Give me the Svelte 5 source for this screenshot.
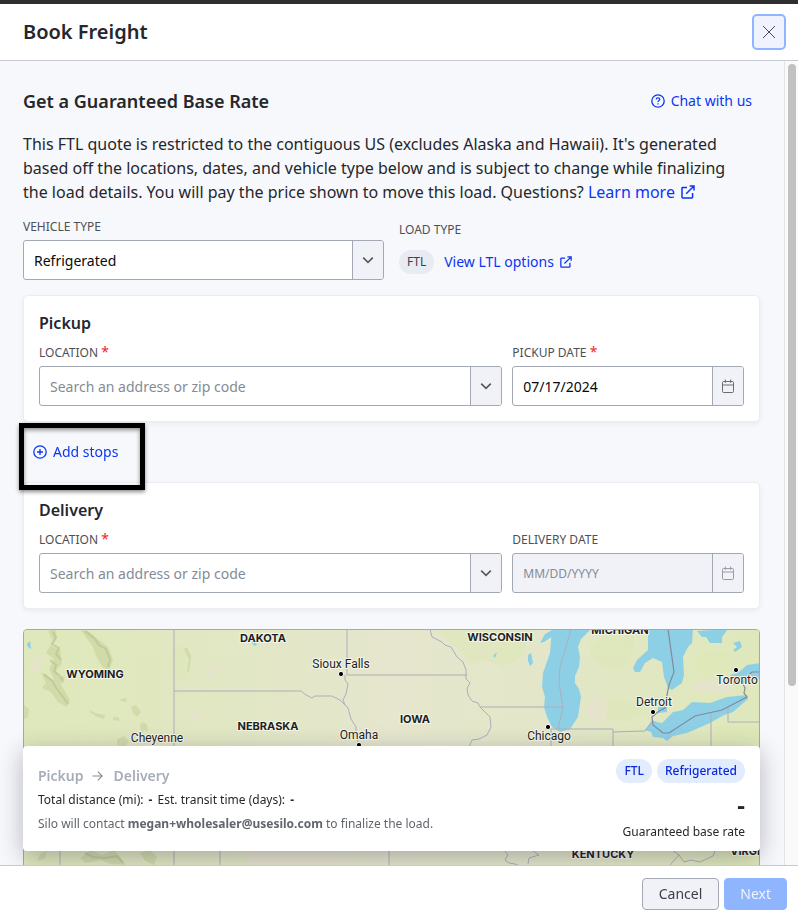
<script lang="ts">
	type MapLabel = { text: string; x: number; y: number };
	type City = MapLabel & { dot?: [number, number] };

	let vehicle = $state('Refrigerated');
	let pickupLocation = $state('');
	let pickupDate = $state('07/17/2024');
	let deliveryLocation = $state('');
	let deliveryDate = $state('');

	const email = 'megan+wholesaler@usesilo.com';
	const vehicles = ['Refrigerated', 'Dry van', 'Flatbed'];

	const states: MapLabel[] = [
		{ text: 'WYOMING', x: 72, y: 49 },
		{ text: 'DAKOTA', x: 240, y: 13 },
		{ text: 'NEBRASKA', x: 245, y: 101 },
		{ text: 'IOWA', x: 392, y: 94 },
		{ text: 'WISCONSIN', x: 477, y: 12 },
		{ text: 'MICHIGAN', x: 597, y: 5 },
		{ text: 'KENTUCKY', x: 580, y: 229 },
		{ text: 'VIRGINIA', x: 732, y: 226 }
	];

	const cities: City[] = [
		{ text: 'Cheyenne', x: 134, y: 113 },
		{ text: 'Sioux Falls', x: 318, y: 39, dot: [318, 45] },
		{ text: 'Omaha', x: 336, y: 110, dot: [336, 116] },
		{ text: 'Chicago', x: 526, y: 111, dot: [525, 98] },
		{ text: 'Detroit', x: 631, y: 77, dot: [630, 83] },
		{ text: 'Toronto', x: 714, y: 55, dot: [713, 41] }
	];

	const lakes = [
		'M529 0L527 24L520 44L519 58L522 68L521 78L524 88L529 98L537 103L547 100L555 88L558 68L556 60L552 54L552 47L556 38L557 28L555 18L558 10L568 0Z',
		'M531 0L522 5L517 14L521 13L530 7Z',
		'M505 26L508 24L510 34L507 37L505 32Z',
		'M625 0L625 21L614 31L610 39L612 43L617 43L622 34L630 29L639 33L641 48L645 59L649 61L659 54L661 46L660 28L665 18L669 14L670 0Z',
		'M674 2L679 8L683 8L687 14L699 14L699 8L705 0Z',
		'M710 14L717 12L719 18L712 23L710 21L714 18Z',
		'M737 34L724 36L715 44L707 46L709 56L719 54L737 50Z',
		'M635 78L644 77L644 83L635 84Z',
		'M622 101L629 91L634 93L639 94L650 83L660 81L669 73L687 74L704 68L724 66L725 70L710 83L701 86L687 94L664 104L650 107L644 112L640 109L630 108L628 103Z',
		'M4 15L7 12L8 20L5 18Z',
		'M229 5L232 13L234 16L231 17L228 11Z',
		'M470 27L474 23L472 29Z'
	];

	const hills = [
		'M25 2L32 0L34 8L28 17L37 20L39 34L33 42L37 49L42 46L40 55L32 52L26 40L31 30L23 24L30 12Z',
		'M58 1L65 2L77 12L85 18L90 31L86 41L80 39L72 25L70 18Z',
		'M18 43L28 50L36 52L47 71L44 78L35 73L28 63L19 59L23 54Z',
		'M164 18L168 27L166 43L164 42L166 31L161 20Z',
		'M67 81L72 84L82 86L81 90L74 88L67 83Z',
		'M98 70L104 69L103 73L97 72Z',
		'M108 78L113 76L118 83L114 88L110 84Z',
		'M118 93L124 95L125 103L121 101L119 105L117 98Z',
		'M91 87L96 89L96 92L90 91Z',
		'M0 75L6 80L5 88L0 91Z',
		'M94 110L101 107L106 112L103 117L94 116Z',
		'M57 229L68 221L79 226L91 221L103 236L88 235L77 231L63 234Z',
		'M117 224L127 221L134 228L131 236L122 232Z',
		'M17 225L24 222L22 230L14 232Z'
	];

	const ridges = [
		'M30 3L33 9L29 15L36 19L33 25L38 31',
		'M27 31L33 36L31 42L37 47L40 52',
		'M62 2L71 9L76 16L83 20L87 31L85 38',
		'M21 45L29 52L34 60L40 68L45 75',
		'M62 224L70 228L82 229L94 227L100 234'
	];

	const borders = [
		'M151 0V450',
		'M151 62H278L283 66L289 69L292 67L309 67L317 71L324 78',
		'M324 0V46H444',
		'M322 46L322 51L325 55L323 65L320 71L322 76L325 79L328 90L333 98L333 106L336 116V222',
		'M407 0L409 8L419 13L422 16L428 18L434 28L440 33L443 41L443 50L447 54L444 59L445 66L449 72L455 74L457 78L467 88L468 98L464 106L456 110L449 111L446 118L445 124',
		'M457 78H540',
		'M548 0L537 38L536 54L540 78L535 100',
		'M528 117V100H590V125M590 103L622 102L629 93',
		'M688 84V125M705 79V93H737',
		'M37 215V450M197 215V450M366 215V450',
		'M482 222L485 226L482 231L486 234L492 235L497 237M510 222L516 226L506 229L505 235',
		'M647 236L656 226L649 221M656 226L661 233L668 231L677 233L690 227L692 222'
	];
</script>

{#snippet chevron()}
	<svg width="12" height="12" viewBox="0 0 12 12" aria-hidden="true">
		<path d="M1.2 3.6 6 8.4l4.8-4.8" fill="none" stroke="#54585f" stroke-width="1.6" />
	</svg>
{/snippet}

{#snippet calendar()}
	<svg width="14" height="14" viewBox="0 0 14 14" fill="none" stroke="currentColor" aria-hidden="true">
		<rect x="1.5" y="2.5" width="11" height="11" rx="1" />
		<path d="M1.5 6h11M4.3.5v3.4M9.7.5v3.4" />
	</svg>
{/snippet}

{#snippet external(size: number)}
	<svg
		class="external"
		width={size}
		height={size}
		viewBox="0 0 14 14"
		fill="none"
		stroke="currentColor"
		stroke-width="1.5"
		aria-hidden="true"
	>
		<path d="M6 2.4H1.7a.7.7 0 0 0-.7.7v9.2c0 .4.3.7.7.7h9.2c.4 0 .7-.3.7-.7V8M8.6 1H13v4.4M13 1 5.2 8.8" />
	</svg>
{/snippet}

<div class="dialog" role="dialog" aria-labelledby="dialog-title">
	<header>
		<h1 id="dialog-title">Book Freight</h1>
		<button class="close" type="button" aria-label="Close">
			<svg width="14" height="14" viewBox="0 0 14 14" aria-hidden="true">
				<path d="m1 1 12 12M13 1 1 13" stroke="#494c53" stroke-width="1" />
			</svg>
		</button>
	</header>

	<div class="body">
		<main>
			<div class="heading">
				<h2>Get a Guaranteed Base Rate</h2>
				<button class="text-button" type="button">
					<svg width="14" height="14" viewBox="0 0 14 14" fill="none" stroke="currentColor" aria-hidden="true">
						<circle cx="7" cy="7" r="6.2" stroke-width="1.3" />
						<path d="M5.2 5.5c0-1 .8-1.6 1.8-1.6s1.8.6 1.8 1.5c0 1.2-1.8 1.2-1.8 2.6M7 9.2v1.2" stroke-width="1.2" />
					</svg>
					Chat with us
				</button>
			</div>

			<p class="intro">
				This FTL quote is restricted to the contiguous US (excludes Alaska and Hawaii). It's generated based off
				the locations, dates, and vehicle type below and is subject to change while finalizing the load details.
				You will pay the price shown to move this load. Questions?
				<a href="#learn-more">Learn more {@render external(14)}</a>
			</p>

			<div class="types">
				<div>
					<label for="vehicle">VEHICLE TYPE</label>
					<div class="control">
						<select id="vehicle" bind:value={vehicle}>
							{#each vehicles as v (v)}
								<option>{v}</option>
							{/each}
						</select>
						<span class="addon passive">{@render chevron()}</span>
					</div>
				</div>
				<div class="load">
					<span class="label">LOAD TYPE</span>
					<div class="load-row">
						<span class="pill">FTL</span>
						<a href="#ltl">View LTL options {@render external(12)}</a>
					</div>
				</div>
			</div>

			<section class="card">
				<h3>Pickup</h3>
				<div class="fields">
					<div>
						<label for="pickup-location">LOCATION <em>*</em></label>
						<div class="control">
							<input id="pickup-location" placeholder="Search an address or zip code" bind:value={pickupLocation} />
							<button class="addon" type="button" aria-label="Show locations">{@render chevron()}</button>
						</div>
					</div>
					<div>
						<label for="pickup-date">PICKUP DATE <em>*</em></label>
						<div class="control">
							<input id="pickup-date" placeholder="MM/DD/YYYY" bind:value={pickupDate} />
							<button class="addon" type="button" aria-label="Open calendar">{@render calendar()}</button>
						</div>
					</div>
				</div>
			</section>

			<div class="stops">
				<button class="text-button" type="button">
					<svg width="14" height="14" viewBox="0 0 14 14" fill="none" stroke="currentColor" aria-hidden="true">
						<circle cx="7" cy="7" r="6.2" stroke-width="1.3" />
						<path d="M7 4v6M4 7h6" stroke-width="1.3" />
					</svg>
					Add stops
				</button>
				<span class="highlight"></span>
			</div>

			<section class="card">
				<h3>Delivery</h3>
				<div class="fields">
					<div>
						<label for="delivery-location">LOCATION <em>*</em></label>
						<div class="control">
							<input
								id="delivery-location"
								placeholder="Search an address or zip code"
								bind:value={deliveryLocation}
							/>
							<button class="addon" type="button" aria-label="Show locations">{@render chevron()}</button>
						</div>
					</div>
					<div>
						<label for="delivery-date">DELIVERY DATE</label>
						<div class="control disabled">
							<input id="delivery-date" placeholder="MM/DD/YYYY" bind:value={deliveryDate} disabled />
							<button class="addon" type="button" aria-label="Open calendar" disabled>{@render calendar()}</button>
						</div>
					</div>
				</div>
			</section>

			<div class="map">
				<svg viewBox="1 1 735 450" preserveAspectRatio="xMidYMin slice" role="img" aria-label="Route map">
					<defs>
						<linearGradient id="land" x1="0" x2="1" y1="0" y2="0">
							<stop offset="0" stop-color="#dfe8bb" />
							<stop offset="0.3" stop-color="#e2e7c5" />
							<stop offset="0.5" stop-color="#e5e6cd" />
							<stop offset="0.7" stop-color="#e3e7c8" />
							<stop offset="1" stop-color="#dfe8bb" />
						</linearGradient>
					</defs>
					<rect width="737" height="452" fill="url(#land)" />
					<g fill="#dce8b5" opacity="0.5">
						<ellipse cx="158" cy="34" rx="10" ry="17" />
						<path d="M412 0L424 12L436 20L448 36L462 30L480 38L498 28L510 0Z" />
						<path d="M566 18L578 8L612 6L608 28L600 42L580 38L570 32Z" />
						<path d="M572 76L590 68L612 74L624 84L606 92L584 90Z" />
						<path d="M672 30L690 20L706 26L704 40L688 46L674 42Z" />
						<path d="M692 98L737 96V118H690Z" />
						<path d="M670 236L688 222L737 216V240H668Z" />
					</g>
					<g fill="#e7e3ce" opacity="0.8">
						<path d="M176 52L190 38L199 36L190 46Z" />
						<path d="M168 86L180 82L179 90L169 90Z" />
						<ellipse cx="275" cy="230" rx="50" ry="12" />
						<ellipse cx="574" cy="80" rx="10" ry="14" />
						<ellipse cx="690" cy="58" rx="22" ry="7" />
						<path d="M3 45L12 30L22 26L16 42Z" />
					</g>
					<g fill="#c9d5a0" opacity="0.65">
						{#each hills as d (d)}
							<path {d} />
						{/each}
					</g>
					<g fill="none" stroke="#b5c08c" stroke-width="2" opacity="0.6">
						{#each ridges as d (d)}
							<path {d} />
						{/each}
					</g>
					<g fill="#8dd0e6">
						{#each lakes as d (d)}
							<path {d} />
						{/each}
					</g>
					<g fill="none" stroke="#adaeba">
						{#each borders as d (d)}
							<path {d} />
						{/each}
					</g>
					<path
						d="M645 0L651 43L646 56L644 66L642 79L636 82L629 88L630 96L640 104H646L672 87L699 81L724 68L721 64L722 59L720 55L721 50L729 43H737"
						fill="none"
						stroke="#85889a"
						stroke-width="1.2"
					/>
					{#each cities as city (city.text)}
						{#if city.dot}
							<circle cx={city.dot[0]} cy={city.dot[1]} r="2.6" stroke="#fff" stroke-width="1" />
						{/if}
						<text class="city" x={city.x} y={city.y}>{city.text}</text>
					{/each}
					{#each states as label (label.text)}
						<text class="state" x={label.x} y={label.y}>{label.text}</text>
					{/each}
				</svg>
			</div>

			<section class="summary">
				<div class="route">
					<div class="ends">
						<span>Pickup</span>
						<svg width="11" height="12" viewBox="0 0 11 12" aria-hidden="true">
							<path d="M.5 6h9.4M5.8 1.6 10.2 6l-4.4 4.4" fill="none" stroke="#858a93" stroke-width="1.1" />
						</svg>
						<span>Delivery</span>
					</div>
					<div class="totals">Total distance (mi): <b>-</b> Est. transit time (days): <b>-</b></div>
					<div class="contact">Silo will contact <b>{email}</b> to finalize the load.</div>
				</div>
				<div class="rate">
					<div class="pills">
						<span class="pill blue">FTL</span>
						<span class="pill blue">{vehicle}</span>
					</div>
					<strong>-</strong>
					<span>Guaranteed base rate</span>
				</div>
			</section>
		</main>
		<div class="scrollbar" aria-hidden="true"><div class="thumb"></div></div>
	</div>

	<footer>
		<button class="cancel" type="button">Cancel</button>
		<button class="next" type="button" disabled>Next</button>
	</footer>
</div>

<style>
	:global(body) {
		margin: 0;
	}

	.dialog {
		box-sizing: border-box;
		display: flex;
		flex-direction: column;
		height: 100vh;
		border-top: 4px solid #2e2e2e;
		background: #fff;
		color: #25272d;
		font-family: 'Noto Sans', sans-serif;
		font-size: 14px;
		line-height: 24px;
	}

	.dialog *,
	.dialog *::before {
		box-sizing: border-box;
	}

	button,
	input,
	select {
		font: inherit;
		margin: 0;
	}

	h1,
	h2,
	h3,
	p {
		margin: 0;
		font-weight: 600;
	}

	header {
		display: flex;
		align-items: center;
		justify-content: space-between;
		padding: 10px 12px 10px 23px;
		border-bottom: 1px solid #c8cad3;
	}

	h1 {
		font-size: 20px;
	}

	.close {
		display: grid;
		place-items: center;
		width: 34px;
		height: 36px;
		padding: 0;
		border: 2px solid #8eb5fd;
		border-radius: 5px;
		background: #f0f2fe;
	}

	.body {
		display: flex;
		flex: 1;
		min-height: 0;
	}

	main {
		flex: 1;
		min-width: 0;
		padding: 28px 24px 14px 23px;
		overflow-y: auto;
		scrollbar-width: none;
		background: #f7f8fb;
	}

	.scrollbar {
		flex: none;
		width: 14px;
		padding: 3px 2px 3px 3px;
		border-left: 1px solid #e4e4e6;
		background: #fafafa;
	}

	.thumb {
		width: 8px;
		height: 78%;
		border-radius: 4px;
		background: #c1c1c1;
	}

	.heading {
		display: flex;
		align-items: center;
		justify-content: space-between;
	}

	h2 {
		font-size: 18px;
	}

	a,
	.text-button {
		color: #0b35f5;
		text-decoration: none;
	}

	.text-button {
		display: inline-flex;
		align-items: center;
		gap: 6px;
		padding: 0 8px;
		border: 0;
		background: none;
	}

	.intro {
		margin: 19px 0 15px;
		padding-right: 16px;
		font-size: 16px;
		font-weight: 400;
	}

	.external {
		margin-left: 2px;
		vertical-align: -1px;
	}

	.types {
		display: grid;
		grid-template-columns: 1fr 1fr;
		gap: 15px;
	}

	label,
	.label {
		display: block;
		margin-bottom: 5px;
		color: #4d5057;
		font-size: 12px;
		line-height: 16px;
	}

	em {
		color: #f0272d;
		font-size: 14px;
		font-style: normal;
		line-height: 14px;
	}

	.control {
		display: grid;
		grid-template-columns: 1fr 31px;
		height: 40px;
		border: 1px solid #a3a8b5;
		border-radius: 3px;
		background: #fff;
		overflow: hidden;
	}

	.control input,
	.control select {
		grid-row: 1;
		grid-column: 1;
		min-width: 0;
		padding: 2px 10px 0;
		border: 0;
		outline: 0;
		background: none;
		color: #08090c;
		appearance: none;
	}

	.control select {
		grid-column: 1 / -1;
	}

	.control input::placeholder {
		color: #848b96;
		opacity: 1;
	}

	.control.disabled {
		background: #f0f2f8;
	}

	.control.disabled input {
		font-size: 12px;
	}

	.addon {
		display: grid;
		grid-row: 1;
		grid-column: 2;
		place-items: center;
		padding: 0;
		border: 0;
		border-left: 1px solid #a3a8b5;
		background: #f0f2f8;
		color: #686c74;
	}

	.addon:disabled {
		color: #969ba5;
	}

	.passive {
		pointer-events: none;
	}

	.load {
		padding-top: 3px;
	}

	.load .label {
		margin-bottom: 12px;
	}

	.load-row {
		display: flex;
		align-items: center;
		gap: 10px;
	}

	.pill {
		padding: 0 8px;
		border-radius: 12px;
		background: #e9ebf2;
		color: #3c3f46;
		font-size: 12px;
	}

	.pill.blue {
		background: #e2ecff;
		color: #0b28dc;
		font-weight: 500;
	}

	.card {
		padding: 15px;
		border: 1px solid #ebedf2;
		border-radius: 5px;
		background: #fff;
		box-shadow: 0 2px 5px rgb(30 35 60 / 6%);
	}

	.types + .card {
		margin-top: 15px;
	}

	h3 {
		margin-bottom: 10px;
		font-size: 16px;
	}

	.fields {
		display: grid;
		grid-template-columns: 2fr 1fr;
		gap: 10px;
	}

	.stops {
		position: relative;
		display: flex;
		align-items: center;
		height: 60px;
		padding-left: 2px;
	}

	.highlight {
		position: absolute;
		top: 1px;
		left: -4px;
		width: 126px;
		height: 67px;
		border: 5px solid #000;
		box-shadow:
			0 2px 4px rgb(0 0 0 / 45%),
			inset 0 2px 4px rgb(0 0 0 / 45%);
		pointer-events: none;
	}

	.map {
		height: 452px;
		margin-top: 20px;
		border: 1px solid #a3a8b5;
		border-radius: 4px;
		overflow: hidden;
	}

	.map svg {
		display: block;
		width: 100%;
		height: 100%;
	}

	.map text {
		fill: #1d1f24;
		stroke: #f5f6e8;
		stroke-width: 2px;
		paint-order: stroke;
		text-anchor: middle;
	}

	.city {
		font: 12px Roboto, sans-serif;
	}

	.state {
		font: 700 11px Inter, sans-serif;
	}

	.summary {
		position: sticky;
		bottom: 0;
		display: flex;
		justify-content: space-between;
		padding: 13px 15px 11px;
		border-radius: 4px;
		background: #fff;
		box-shadow: 0 6px 24px rgb(30 25 60 / 30%);
		font-size: 12px;
	}

	.route {
		padding-top: 5px;
	}

	.ends {
		display: flex;
		align-items: center;
		color: #a6adb9;
		font-size: 14px;
		font-weight: 600;
		gap: 8px;
	}

	.ends svg {
		margin-right: 3px;
	}

	.totals b {
		margin: 0 2px;
	}

	.contact {
		color: #61656d;
	}

	.rate {
		display: flex;
		flex-direction: column;
		align-items: flex-end;
	}

	.pills {
		display: flex;
		gap: 5px;
	}

	strong {
		margin-top: 10px;
		font-size: 24px;
	}

	.rate > span {
		margin-top: 6px;
		line-height: 17px;
	}

	footer {
		display: flex;
		justify-content: flex-end;
		gap: 5px;
		padding: 12px 11px 7px;
		border-top: 1px solid #c8cad3;
	}

	footer button {
		height: 32px;
		border: 1px solid #a3a8b5;
		border-radius: 4px;
	}

	.cancel {
		padding: 0 16px;
		background: #f0f2f8;
		color: #3c3f46;
	}

	.next {
		padding: 0 15px;
		border-color: #8eb5fd;
		background: #8eb5fd;
		color: #eef4ff;
	}
</style>
